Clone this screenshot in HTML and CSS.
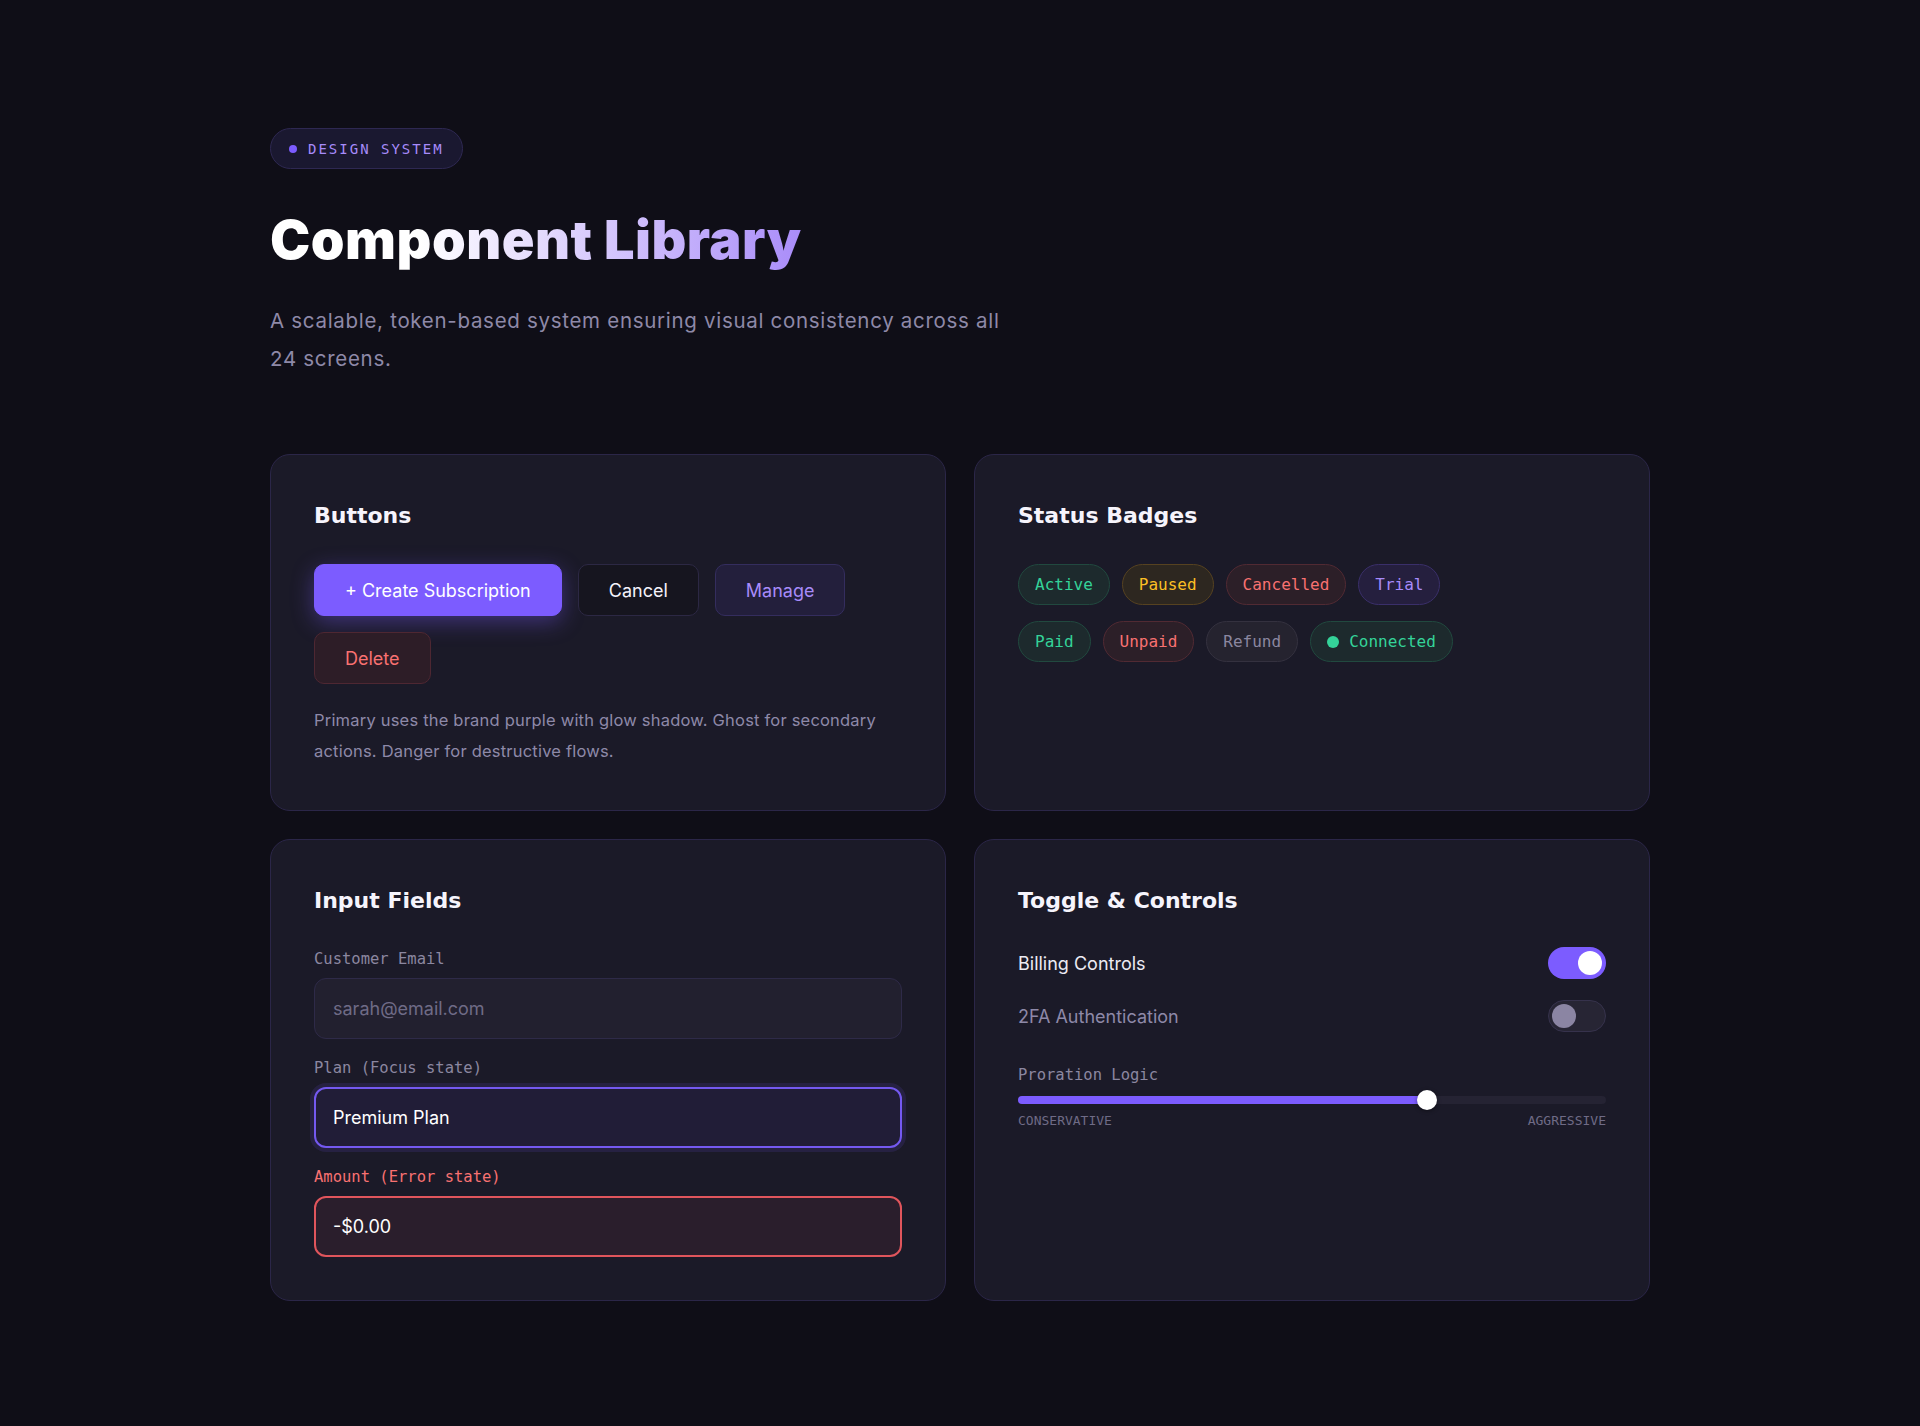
FILE: index.html
```html
<!DOCTYPE html>
<html lang="en">
<head>
<meta charset="utf-8">
<title>Component Library</title>
<link rel="stylesheet" href="styles.css">
</head>
<body>
<main class="page">
  <header class="intro">
    <span class="eyebrow"><span class="eyebrow-dot"></span>DESIGN SYSTEM</span>
    <h1 class="headline">Component Library</h1>
    <p class="lede">A scalable, token-based system ensuring visual consistency across all 24 screens.</p>
  </header>

  <section class="grid">
    <article class="card">
      <h2 class="card-title">Buttons</h2>
      <div class="btn-row">
        <button class="btn btn-primary">+ Create Subscription</button>
        <button class="btn btn-ghost">Cancel</button>
        <button class="btn btn-soft">Manage</button>
        <button class="btn btn-danger">Delete</button>
      </div>
      <p class="card-note">Primary uses the brand purple with glow shadow. Ghost for secondary actions. Danger for destructive flows.</p>
    </article>

    <article class="card">
      <h2 class="card-title">Status Badges</h2>
      <div class="badge-rows">
        <div class="badge-row">
          <span class="badge badge-green">Active</span>
          <span class="badge badge-amber">Paused</span>
          <span class="badge badge-red">Cancelled</span>
          <span class="badge badge-purple">Trial</span>
        </div>
        <div class="badge-row">
          <span class="badge badge-green">Paid</span>
          <span class="badge badge-red">Unpaid</span>
          <span class="badge badge-grey">Refund</span>
          <span class="badge badge-green"><span class="badge-dot"></span>Connected</span>
        </div>
      </div>
    </article>

    <article class="card">
      <h2 class="card-title">Input Fields</h2>
      <div class="field">
        <label class="field-label">Customer Email</label>
        <div class="input input-placeholder">sarah@email.com</div>
      </div>
      <div class="field">
        <label class="field-label">Plan (Focus state)</label>
        <div class="input input-focus">Premium Plan</div>
      </div>
      <div class="field">
        <label class="field-label field-label-error">Amount (Error state)</label>
        <div class="input input-error">-$0.00</div>
      </div>
    </article>

    <article class="card">
      <h2 class="card-title">Toggle &amp; Controls</h2>
      <div class="toggle-list">
        <div class="toggle-row">
          <span class="toggle-label">Billing Controls</span>
          <span class="switch switch-on"><span class="switch-knob"></span></span>
        </div>
        <div class="toggle-row">
          <span class="toggle-label toggle-label-muted">2FA Authentication</span>
          <span class="switch switch-off"><span class="switch-knob"></span></span>
        </div>
      </div>
      <div class="slider-block">
        <div class="field-label">Proration Logic</div>
        <div class="slider">
          <div class="slider-fill" style="width: 69.5%"></div>
          <span class="slider-thumb" style="left: 69.5%"></span>
        </div>
        <div class="slider-scale">
          <span>CONSERVATIVE</span>
          <span>AGGRESSIVE</span>
        </div>
      </div>
    </article>
  </section>
</main>
</body>
</html>
```

FILE: styles.css
```css
* {
  box-sizing: border-box;
}

html,
body {
  margin: 0;
  background: #0f0e17;
}

body {
  font-family: "Inter", "Noto Sans", sans-serif;
  color: #f4f2fb;
  min-height: 1426px;
}

.page {
  max-width: 1380px;
  margin: 0 auto;
  padding: 128px 0 126px;
}

/* ---------- intro ---------- */

.intro {
  display: flex;
  flex-direction: column;
  align-items: flex-start;
}

.eyebrow {
  display: inline-flex;
  align-items: center;
  gap: 11px;
  height: 41px;
  padding: 0 18px 0 18px;
  border: 1px solid #2e2852;
  border-radius: 999px;
  background: #1a1830;
  color: #a78bfa;
  font-family: "DejaVu Sans Mono", monospace;
  font-size: 14px;
  letter-spacing: 2px;
}

.eyebrow-dot {
  width: 8px;
  height: 8px;
  border-radius: 50%;
  background: #7c5cff;
}

.headline {
  margin: 41px 0 32px;
  font-family: "Inter", sans-serif;
  font-weight: 900;
  font-size: 54px;
  line-height: 60px;
  letter-spacing: 0.5px;
  background: linear-gradient(90deg, #ffffff 0%, #ffffff 28%, #a98cf9 100%);
  -webkit-background-clip: text;
  background-clip: text;
  color: transparent;
}

.lede {
  margin: 0;
  max-width: 748px;
  font-size: 20.5px;
  line-height: 38px;
  letter-spacing: 0.7px;
  color: #8e89a8;
}

/* ---------- grid + cards ---------- */

.grid {
  margin-top: 76px;
  display: grid;
  grid-template-columns: 1fr 1fr;
  gap: 28px;
}

.card {
  background: #1b1a28;
  border: 1px solid #2b2648;
  border-radius: 20px;
  padding: 47px 43px 43px;
}

.card-title {
  margin: 0 0 34px;
  font-family: "DejaVu Sans", sans-serif;
  font-weight: 700;
  font-size: 22px;
  line-height: 28px;
  color: #f6f4fc;
}

/* ---------- buttons ---------- */

.btn-row {
  display: flex;
  flex-wrap: wrap;
  gap: 16px;
}

.btn {
  height: 52px;
  padding: 0 30px;
  border-radius: 10px;
  font-family: "Inter", sans-serif;
  font-size: 18px;
  cursor: pointer;
}

.btn-primary {
  border: 1px solid #7c5cff;
  background: #7c5cff;
  color: #ffffff;
  box-shadow: 0 6px 22px rgba(124, 92, 255, 0.38);
}

.btn-ghost {
  border: 1px solid #2c2844;
  background: #16151f;
  color: #f4f2fb;
}

.btn-soft {
  border: 1px solid #342d5e;
  background: #231f3c;
  color: #a78bfa;
}

.btn-danger {
  border: 1px solid #4e2732;
  background: #2d1d27;
  color: #f87171;
}

.card-note {
  margin: 21px 0 0;
  font-size: 16.5px;
  line-height: 31px;
  letter-spacing: 0.2px;
  color: #8e89a8;
}

/* ---------- badges ---------- */

.badge-rows {
  display: flex;
  flex-direction: column;
  gap: 16px;
}

.badge-row {
  display: flex;
  gap: 12px;
  align-items: center;
}

.badge {
  display: inline-flex;
  align-items: center;
  gap: 10px;
  height: 41px;
  padding: 0 16px;
  border: 1px solid;
  border-radius: 999px;
  font-family: "DejaVu Sans Mono", monospace;
  font-size: 16px;
}

.badge-green {
  color: #34d399;
  background: #1d2a2d;
  border-color: #21493f;
}

.badge-amber {
  color: #fbbf24;
  background: #2d2720;
  border-color: #564220;
}

.badge-red {
  color: #f87171;
  background: #2c1f28;
  border-color: #512a33;
}

.badge-purple {
  color: #a78bfa;
  background: #251f3e;
  border-color: #3a2f6a;
}

.badge-grey {
  color: #8b87a0;
  background: #25232f;
  border-color: #34313f;
}

.badge-dot {
  width: 12px;
  height: 12px;
  border-radius: 50%;
  background: #34d399;
}

/* ---------- inputs ---------- */

.card-title + .field {
  margin-top: 5px;
}

.field + .field {
  margin-top: 19px;
}

.field-label {
  display: block;
  margin-bottom: 9px;
  font-family: "DejaVu Sans Mono", monospace;
  font-size: 15.5px;
  line-height: 20px;
  color: #8b87a0;
}

.field-label-error {
  color: #f87171;
}

.input {
  height: 61px;
  display: flex;
  align-items: center;
  padding: 0 18px;
  border-radius: 12px;
  font-size: 18px;
}

.input-placeholder {
  border: 1px solid #2e2a48;
  background: #22202f;
  color: #6f6b86;
}

.input-focus {
  border: 2px solid #7459f0;
  padding-left: 17px;
  background: #211d37;
  color: #ffffff;
  box-shadow: 0 0 0 4px rgba(124, 92, 255, 0.12);
}

.input-error {
  border: 2px solid #e0555c;
  padding-left: 17px;
  background: #2a1e2c;
  color: #ffffff;
}

/* ---------- toggles + slider ---------- */

.toggle-list {
  margin-top: -2px;
  display: flex;
  flex-direction: column;
  gap: 21px;
}

.toggle-row {
  display: flex;
  align-items: center;
  justify-content: space-between;
}

.toggle-label {
  font-size: 18px;
  color: #ecebf3;
}

.toggle-label-muted {
  color: #8e89a8;
}

.switch {
  position: relative;
  width: 58px;
  height: 32px;
  border-radius: 999px;
}

.switch-knob {
  position: absolute;
  top: 4px;
  width: 24px;
  height: 24px;
  border-radius: 50%;
}

.switch-on {
  background: #7c5cff;
}

.switch-on .switch-knob {
  right: 4px;
  background: #ffffff;
}

.switch-off {
  background: #272534;
  border: 1px solid #36324c;
}

.switch-off .switch-knob {
  top: 3px;
  left: 3px;
  background: #8b85a3;
}

.slider-block {
  margin-top: 33px;
}

.slider-block .field-label {
  margin-bottom: 11px;
}

.slider {
  position: relative;
  height: 8px;
  border-radius: 999px;
  background: #252333;
}

.slider-fill {
  height: 100%;
  border-radius: 999px;
  background: #7c5cff;
}

.slider-thumb {
  position: absolute;
  top: 50%;
  width: 20px;
  height: 20px;
  margin: -10px 0 0 -10px;
  border-radius: 50%;
  background: #ffffff;
  box-shadow: 0 1px 4px rgba(0, 0, 0, 0.4);
}

.slider-scale {
  margin-top: 9px;
  display: flex;
  justify-content: space-between;
  font-family: "DejaVu Sans Mono", monospace;
  font-size: 13px;
  line-height: 16px;
  color: #6f6b86;
}
```
